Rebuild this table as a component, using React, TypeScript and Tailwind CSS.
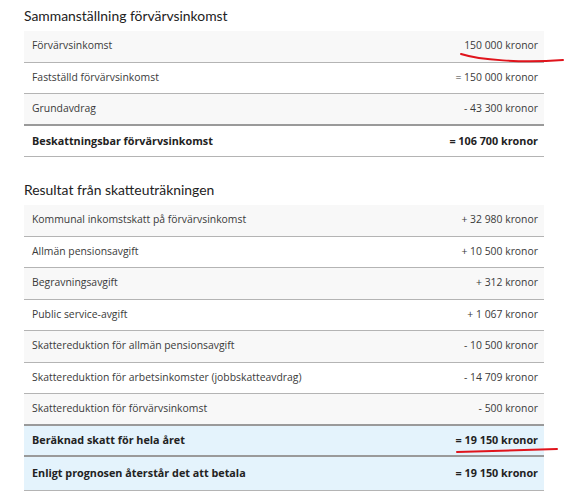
import React from "react";

type Row = {
  label: string;
  value: string;
  bold?: boolean;
  tint?: "gray" | "white" | "blue";
  thick?: boolean;
  tall?: boolean;
};

const income: Row[] = [
  { label: "Förvärvsinkomst", value: "150 000 kronor", tint: "gray" },
  { label: "Fastställd förvärvsinkomst", value: "= 150 000 kronor", tint: "white" },
  { label: "Grundavdrag", value: "- 43 300 kronor", tint: "gray", thick: true },
  { label: "Beskattningsbar förvärvsinkomst", value: "= 106 700 kronor", bold: true, tint: "white" },
];

const result: Row[] = [
  { label: "Kommunal inkomstskatt på förvärvsinkomst", value: "+ 32 980 kronor", tint: "gray" },
  { label: "Allmän pensionsavgift", value: "+ 10 500 kronor", tint: "white" },
  { label: "Begravningsavgift", value: "+ 312 kronor", tint: "gray" },
  { label: "Public service-avgift", value: "+ 1 067 kronor", tint: "white" },
  { label: "Skattereduktion för allmän pensionsavgift", value: "- 10 500 kronor", tint: "gray" },
  { label: "Skattereduktion för arbetsinkomster (jobbskatteavdrag)", value: "- 14 709 kronor", tint: "white" },
  { label: "Skattereduktion för förvärvsinkomst", value: "- 500 kronor", tint: "gray", thick: true },
  { label: "Beräknad skatt för hela året", value: "= 19 150 kronor", bold: true, tint: "blue", thick: true },
  { label: "Enligt prognosen återstår det att betala", value: "= 19 150 kronor", bold: true, tint: "blue", tall: true },
];

function TableRow({ row }: { row: Row }) {
  const bg =
    row.tint === "gray" ? "bg-[#f8f8f8]" : row.tint === "blue" ? "bg-[#e4f3fc]" : "bg-white";
  const border = row.thick ? "border-b-2 border-[#9a9a9a]" : "border-b border-[#b4b4b4]";
  const weight = row.bold ? "font-bold text-[#222] text-[10.8px]" : "text-[#3a3a3a] text-[10.4px]";
  const height = row.tall ? "h-[33.5px]" : "h-[31.5px]";
  return (
    <div className={`flex ${height} items-center justify-between pl-2 pr-[6px] ${bg} ${border} ${weight}`}>
      <span>{row.label}</span>
      <span>{row.value}</span>
    </div>
  );
}

export default function App() {
  return (
    <div
      className="relative min-h-[500px] w-[565px] bg-white px-6 pt-[6px]"
      style={{ fontFamily: "'Open Sans', 'Noto Sans', sans-serif" }}
    >
      <h2 className="mb-[5px] text-[13.9px] leading-5 text-[#222]" style={{ fontFamily: "Lato, 'Open Sans', sans-serif" }}>
        Sammanställning förvärvsinkomst
      </h2>
      <div className="w-[520px]">
        {income.map((r) => (
          <TableRow key={r.label} row={r} />
        ))}
      </div>

      <h2 className="mb-[5px] mt-[23px] text-[13.9px] leading-5 text-[#222]" style={{ fontFamily: "Lato, 'Open Sans', sans-serif" }}>
        Resultat från skatteuträkningen
      </h2>
      <div className="w-[520px]">
        {result.map((r) => (
          <TableRow key={r.label} row={r} />
        ))}
      </div>

      <svg className="pointer-events-none absolute left-0 top-0" width="565" height="500">
        <path d="M461 54 C 480 60, 520 63, 563 60" fill="none" stroke="#e0141c" strokeWidth="2" strokeLinecap="round" />
        <path d="M457 452 C 485 451, 525 450, 557 449" fill="none" stroke="#e0141c" strokeWidth="2" strokeLinecap="round" />
      </svg>
    </div>
  );
}
